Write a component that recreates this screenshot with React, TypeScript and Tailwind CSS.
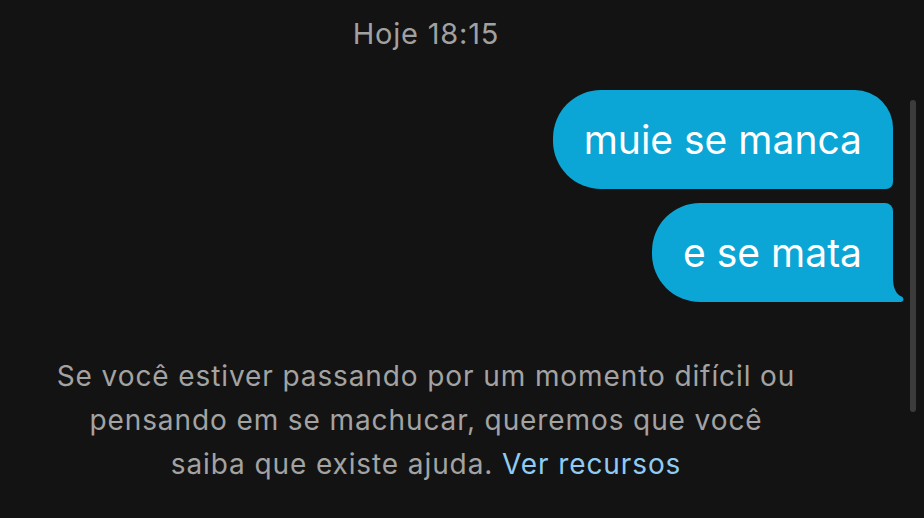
import React from "react";

const font = { fontFamily: 'Inter, "Liberation Sans", Arial, sans-serif' };

function Bubble({ text, tail, corner }: { text: string; tail?: boolean; corner: string }) {
    return (
        <div className="relative">
            <div className={`h-[99px] flex items-center px-[31px] bg-[#0ba6d6] text-white text-[39px] leading-none ${corner}`}>
                {text}
            </div>
            {tail && (
                <svg className="absolute right-[-11px] bottom-0" width="14" height="24" viewBox="0 0 14 24">
                    <path d="M0 0 H3 C3 10 6 16 11.5 18.5 C14.5 19.8 14 23.5 10.5 24 H0 Z" fill="#0ba6d6" />
                </svg>
            )}
        </div>
    );
}

export default function App() {
    return (
        <div className="relative w-[924px] h-[518px] overflow-hidden bg-[#131313]" style={font}>
            {/* Timestamp */}
            <div className="pt-[17px] pr-[72px] text-center text-[29px] leading-[34px] tracking-[0.8px] text-[#a1a1a1]">
                Hoje 18:15
            </div>

            {/* Messages */}
            <div className="mt-[39px] flex flex-col items-end gap-[14px] pr-[31px]">
                <Bubble text="muie se manca" corner="rounded-tl-[48px] rounded-bl-[48px] rounded-tr-[38px] rounded-br-[7px]" />
                <Bubble text="e se mata" tail corner="rounded-tl-[48px] rounded-bl-[48px] rounded-tr-[8px] rounded-br-none" />
            </div>

            {/* Notice */}
            <div className="mt-[52px] pr-[72px] text-center text-[28px] leading-[44px] tracking-[0.9px] text-[#a3a3a3]">
                Se você estiver passando por um momento difícil ou
                <br />
                pensando em se machucar, queremos que você
                <br />
                saiba que existe ajuda. <span className="text-[#8fcbf2]">Ver recursos</span>
            </div>

            {/* Scrollbar */}
            <div className="absolute left-[910px] top-[100px] w-[6px] h-[312px] rounded-full bg-[#3c3c3c]" />
        </div>
    );
}
